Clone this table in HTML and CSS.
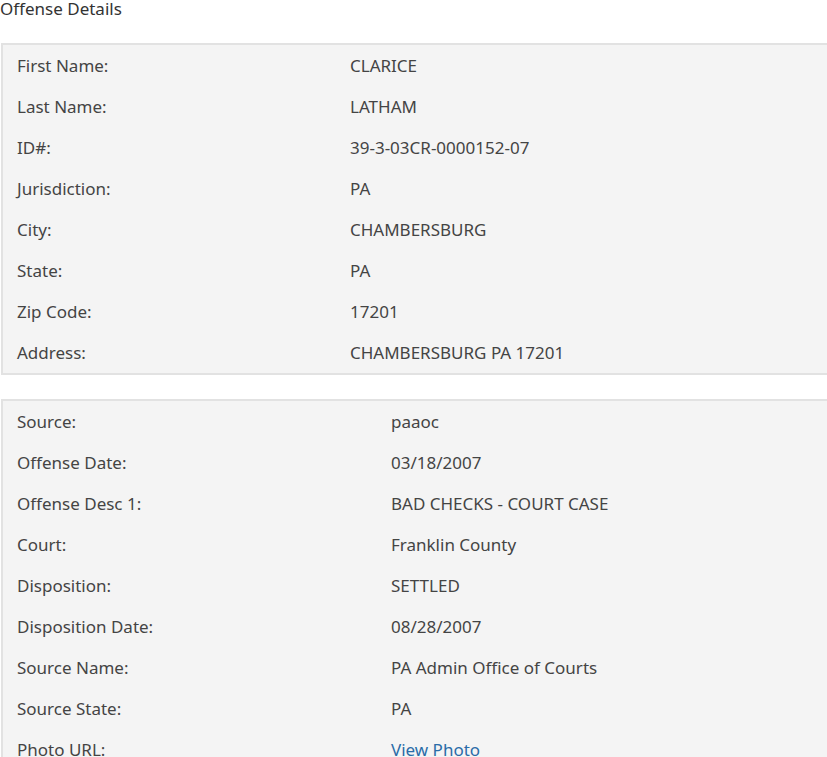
FILE: index.html
```html
<!DOCTYPE HTML>
<html>
<head>
  <title>Offense Details</title>
  <meta charset="utf-8">
  <link rel="stylesheet" href="styles.css">
</head>
<body>
  <h4 class="page-title">Offense Details</h4>

  <div class="detail-panel" id="person_panel">
    <div class="detail-row"><span class="detail-label">First Name:</span><span class="detail-value">CLARICE</span></div>
    <div class="detail-row"><span class="detail-label">Last Name:</span><span class="detail-value">LATHAM</span></div>
    <div class="detail-row"><span class="detail-label">ID#:</span><span class="detail-value">39-3-03CR-0000152-07</span></div>
    <div class="detail-row"><span class="detail-label">Jurisdiction:</span><span class="detail-value">PA</span></div>
    <div class="detail-row"><span class="detail-label">City:</span><span class="detail-value">CHAMBERSBURG</span></div>
    <div class="detail-row"><span class="detail-label">State:</span><span class="detail-value">PA</span></div>
    <div class="detail-row"><span class="detail-label">Zip Code:</span><span class="detail-value">17201</span></div>
    <div class="detail-row"><span class="detail-label">Address:</span><span class="detail-value">CHAMBERSBURG PA 17201</span></div>
  </div>

  <div class="detail-panel" id="offense_panel">
    <div class="detail-row"><span class="detail-label">Source:</span><span class="detail-value">paaoc</span></div>
    <div class="detail-row"><span class="detail-label">Offense Date:</span><span class="detail-value">03/18/2007</span></div>
    <div class="detail-row"><span class="detail-label">Offense Desc 1:</span><span class="detail-value">BAD CHECKS - COURT CASE</span></div>
    <div class="detail-row"><span class="detail-label">Court:</span><span class="detail-value">Franklin County</span></div>
    <div class="detail-row"><span class="detail-label">Disposition:</span><span class="detail-value">SETTLED</span></div>
    <div class="detail-row"><span class="detail-label">Disposition Date:</span><span class="detail-value">08/28/2007</span></div>
    <div class="detail-row"><span class="detail-label">Source Name:</span><span class="detail-value">PA Admin Office of Courts</span></div>
    <div class="detail-row"><span class="detail-label">Source State:</span><span class="detail-value">PA</span></div>
    <div class="detail-row"><span class="detail-label">Photo URL:</span><span class="detail-value"><a href="#">View Photo</a></span></div>
  </div>
</body>
</html>
```

FILE: styles.css
```css
html {
  overflow: hidden;
}
body {
  margin: 0;
  font-family: "Noto Sans", "Open Sans", sans-serif;
  font-size: 17px;
  color: #444;
  background-color: #fff;
}
.page-title {
  margin: 0 0 26px 0;
  font-size: 17px;
  font-weight: normal;
  line-height: 17px;
  color: #333;
}
.detail-panel {
  width: 900px;
  margin: 0 0 24px 1px;
  background-color: #f4f4f4;
  border: 2px solid #e2e2e2;
}
.detail-row {
  display: grid;
  grid-template-columns: 333px 1fr;
  height: 41px;
  line-height: 20px;
  align-items: center;
}
#offense_panel .detail-row {
  grid-template-columns: 374px 1fr;
}
.detail-label {
  padding-left: 14px;
}
.detail-value {
  padding-left: 14px;
}
a {
  color: #2a6ca8;
  text-decoration: underline;
}
```
